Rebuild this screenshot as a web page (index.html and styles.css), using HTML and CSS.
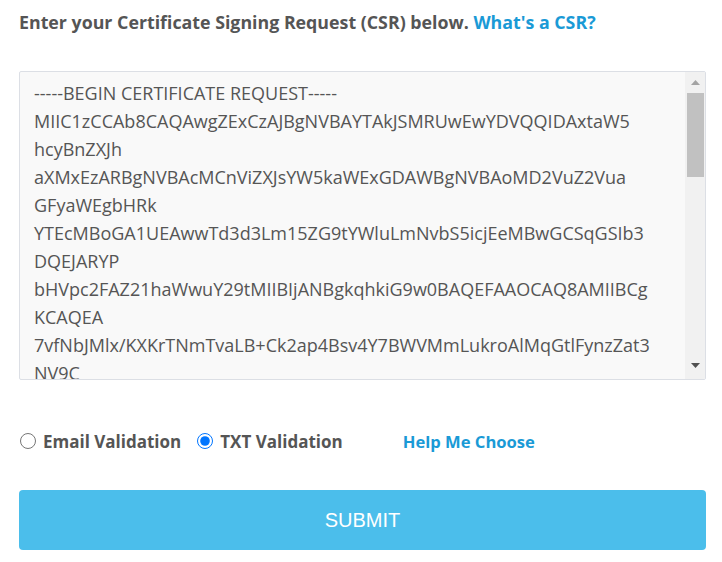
FILE: index.html
```html
<!DOCTYPE html>
<html lang="en">
<head>
  <meta charset="UTF-8">
  <meta name="viewport" content="width=device-width, initial-scale=1.0">
  <title>Submit CSR</title>
  <link rel="stylesheet" href="styles.css">
</head>
<body>
  <form class="csr-form" id="csrForm">
    <p class="intro">Enter your Certificate Signing Request (CSR) below. <a href="#" class="link">What's a CSR?</a></p>

    <div class="csr-box">
      <textarea class="csr-input" id="csr" name="csr" spellcheck="false">-----BEGIN CERTIFICATE REQUEST-----
MIIC1zCCAb8CAQAwgZExCzAJBgNVBAYTAkJSMRUwEwYDVQQIDAxtaW5
hcyBnZXJh
aXMxEzARBgNVBAcMCnViZXJsYW5kaWExGDAWBgNVBAoMD2VuZ2Vua
GFyaWEgbHRk
YTEcMBoGA1UEAwwTd3d3Lm15ZG9tYWluLmNvbS5icjEeMBwGCSqGSIb3
DQEJARYP
bHVpc2FAZ21haWwuY29tMIIBIjANBgkqhkiG9w0BAQEFAAOCAQ8AMIIBCg
KCAQEA
7vfNbJMlx/KXKrTNmTvaLB+Ck2ap4Bsv4Y7BWVMmLukroAlMqGtlFynzZat3
NV9C
yGq2mE1vQ3cZkP0fT8aRbWxLhN5uIeKoJs4dVtYgHc2pQ7wXzA9BnFmS1lEr
-----END CERTIFICATE REQUEST-----</textarea>
      <div class="scrollbar" aria-hidden="true">
        <div class="scroll-btn">
          <svg width="9" height="5" viewBox="0 0 9 5"><path d="M0 5 L4.5 0 L9 5 Z" fill="#a3a3a3"/></svg>
        </div>
        <div class="scroll-track">
          <div class="scroll-thumb"></div>
        </div>
        <div class="scroll-btn down">
          <svg width="9" height="5" viewBox="0 0 9 5"><path d="M0 0 L4.5 5 L9 0 Z" fill="#505050"/></svg>
        </div>
      </div>
    </div>

    <div class="options">
      <label class="option"><input type="radio" name="validation" value="email"> Email Validation</label>
      <label class="option"><input type="radio" name="validation" value="txt" checked> TXT Validation</label>
      <a href="#" class="link help">Help Me Choose</a>
    </div>

    <button type="submit" class="submit">SUBMIT</button>
  </form>
</body>
</html>
```

FILE: styles.css
```css
body {
  margin: 0;
  padding: 0 16px 0 19px;
  font-family: 'Open Sans', sans-serif;
  color: #555;
  background: #fff;
}

.csr-form {
  display: flex;
  flex-direction: column;
}

.intro {
  margin: 10px 0 0;
  font-size: 17.8px;
  font-weight: bold;
  line-height: 24px;
}

.link {
  color: #1a9ad6;
  text-decoration: none;
  font-weight: bold;
}

.csr-box {
  position: relative;
  margin-top: 37px;
  height: 309px;
}

.csr-input {
  display: block;
  width: 100%;
  height: 100%;
  box-sizing: border-box;
  padding: 7px 34px 7px 14px;
  border: 1px solid #dcdfe5;
  border-radius: 2px;
  background: #f9f9f9;
  color: #555;
  font-family: 'Open Sans', sans-serif;
  font-size: 18px;
  line-height: 28px;
  resize: none;
  outline: none;
  white-space: pre;
  overflow: hidden;
}

/* drawn scrollbar, the native one is hidden in the capture */
.scrollbar {
  position: absolute;
  top: 1px;
  right: 1px;
  bottom: 1px;
  width: 20px;
  display: flex;
  flex-direction: column;
  background: #f1f1f1;
}

.scroll-btn {
  height: 20px;
  display: flex;
  justify-content: center;
  align-items: center;
  padding-left: 1px;
}

.scroll-btn.down {
  align-items: flex-start;
  padding-top: 4px;
  height: 16px;
}

.scroll-btn svg {
  display: block;
}

.scroll-track {
  flex: 1;
  padding: 1px 1px 0 2px;
}

.scroll-thumb {
  height: 84px;
  background: #c1c1c1;
}

.options {
  display: flex;
  align-items: center;
  margin-top: 48px;
  height: 26px;
}

.option {
  display: flex;
  align-items: center;
  gap: 7px;
  margin-right: 15px;
  font-size: 17px;
  font-weight: bold;
  cursor: pointer;
}

.option input {
  width: 16px;
  height: 16px;
  margin: 0 0 0 1px;
}

.help {
  margin-left: 45px;
  font-size: 16.6px;
}

.submit {
  margin-top: 36px;
  height: 60px;
  border: none;
  border-radius: 4px;
  background: #4bbeeb;
  color: #fff;
  font-family: 'Liberation Sans', sans-serif;
  font-size: 20px;
  cursor: pointer;
}
```
